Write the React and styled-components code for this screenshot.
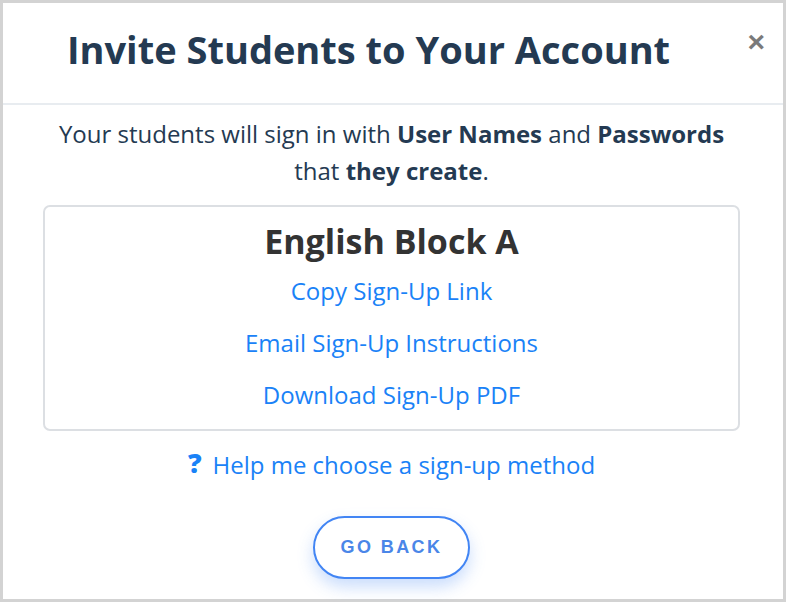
import React from "react";
import styled, { createGlobalStyle } from "styled-components";

const GlobalStyle = createGlobalStyle`
  html, body {
    margin: 0;
    padding: 0;
    background: #ffffff;
  }
  body {
    font-family: "Open Sans", "Noto Sans", sans-serif;
  }
`;

const Modal = styled.div`
  box-sizing: border-box;
  width: 786px;
  height: 602px;
  border: 3px solid #d3d3d3;
  background: #fff;
  display: flex;
  flex-direction: column;
`;

const Header = styled.header`
  position: relative;
  box-sizing: border-box;
  height: 102px;
  flex: none;
  display: flex;
  align-items: center;
  justify-content: center;
  padding-right: 49px;
  border-bottom: 2px solid #e8ecf0;
`;

const Title = styled.h1`
  margin: 0;
  padding-bottom: 8px;
  font-size: 38px;
  font-weight: 700;
  color: #243a52;
`;

const Close = styled.button`
  position: absolute;
  top: 24px;
  right: 18px;
  border: 0;
  background: none;
  padding: 0;
  font-family: "Liberation Sans", Arial, sans-serif;
  font-size: 30px;
  font-weight: 700;
  line-height: 1;
  color: #7a7a7a;
  cursor: pointer;
`;

const Body = styled.main`
  display: flex;
  flex-direction: column;
  align-items: center;
  padding: 10px 43px 0 40px;
`;

const Lead = styled.p`
  margin: 0;
  text-align: center;
  font-size: 24px;
  line-height: 37px;
  color: #243a52;

  b {
    font-weight: 700;
  }
`;

const Card = styled.section`
  box-sizing: border-box;
  align-self: stretch;
  margin-top: 16px;
  border: 2px solid #dcdfe3;
  border-radius: 7px;
  display: flex;
  flex-direction: column;
  align-items: center;
  padding: 14px 0 8px;
`;

const CardTitle = styled.h2`
  margin: 0 0 4px;
  font-size: 34px;
  line-height: 40px;
  font-weight: 700;
  color: #333333;
`;

const Link = styled.a`
  display: block;
  font-size: 24px;
  line-height: 52px;
  color: #1a82f7;
  text-decoration: none;
  cursor: pointer;
`;

const HelpLink = styled(Link)`
  margin-top: 16px;
  line-height: 36px;
  display: flex;
  align-items: center;
  gap: 11px;
`;

const QuestionMark = styled.span`
  font-weight: 800;
  font-size: 27px;
  font-family: "Open Sans", sans-serif;
  transform: translateY(-2px);
`;

const BackButton = styled.button`
  box-sizing: border-box;
  margin-top: 33px;
  width: 157px;
  height: 63px;
  border: 2px solid #4285f4;
  border-radius: 32px;
  background: #fff;
  color: #4a86e8;
  font-family: "Liberation Sans", Arial, sans-serif;
  font-size: 18px;
  font-weight: 700;
  letter-spacing: 2.4px;
  box-shadow: 0 8px 16px rgba(66, 133, 244, 0.28);
  cursor: pointer;
`;

export default function App() {
  return (
    <>
      <GlobalStyle />
      <Modal>
        <Header>
          <Title>Invite Students to Your Account</Title>
          <Close aria-label="Close">×</Close>
        </Header>
        <Body>
          <Lead>
            Your students will sign in with <b>User Names</b> and <b>Passwords</b>
            <br />
            that <b>they create</b>.
          </Lead>
          <Card>
            <CardTitle>English Block A</CardTitle>
            <Link>Copy Sign-Up Link</Link>
            <Link>Email Sign-Up Instructions</Link>
            <Link>Download Sign-Up PDF</Link>
          </Card>
          <HelpLink>
            <QuestionMark>?</QuestionMark>
            Help me choose a sign-up method
          </HelpLink>
          <BackButton>GO BACK</BackButton>
        </Body>
      </Modal>
    </>
  );
}
